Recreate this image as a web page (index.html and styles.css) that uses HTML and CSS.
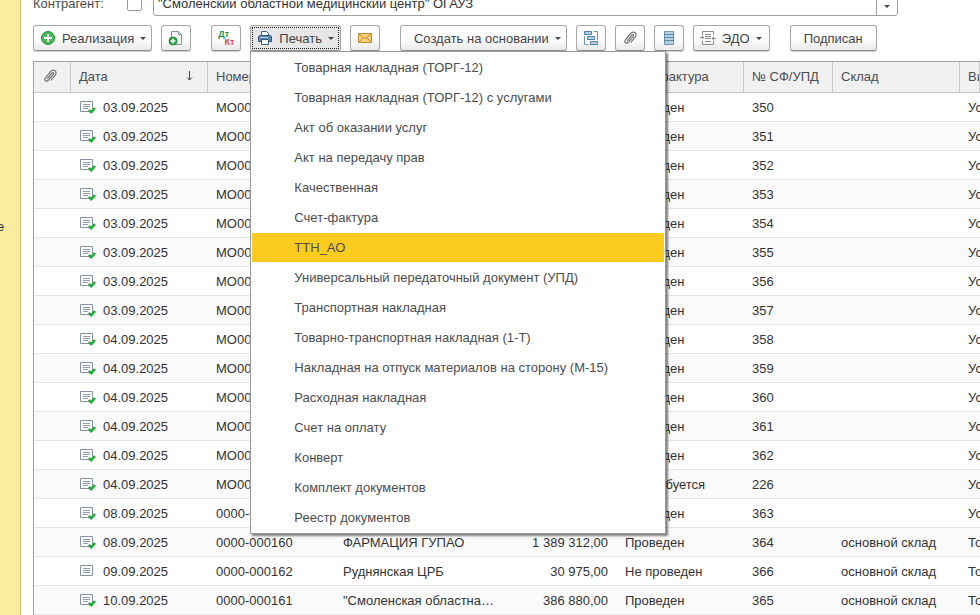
FILE: index.html
```html
<!DOCTYPE html>
<html lang="ru">
<head>
    <meta charset="UTF-8">
    <meta name="viewport" content="width=device-width, initial-scale=1.0">
    <title>Реализация</title>
    <link rel="stylesheet" href="styles.css">
</head>
<body>
    <!-- Общие значки -->
    <svg class="icon-defs" width="0" height="0" aria-hidden="true">
        <symbol id="clip" viewBox="0 0 16 16">
            <path d="M5.300 10.800L9.800 5.200c1.100-1.300 2.500-.2 1.500 1.100L6.500 12.200c-1.900 2.300-4.900.1-3.200-2.200L8.500 3.600c2.800-3.400 7.300-.3 4.800 3.200L8.800 12.500" fill="none" stroke="#707070" stroke-width="1.200"/>
        </symbol>
        <symbol id="doc" viewBox="0 0 16 14">
            <path d="M.5 1.500h12v10H.5z" fill="#fff" stroke="#8294a8"/>
            <path d="M3 4.500h7M3 6.500h7M3 8.500h7" stroke="#8d9cae"/>
        </symbol>
        <symbol id="posted" viewBox="0 0 16 14">
            <path d="M.5 1.500h12v10H.5z" fill="#fff" stroke="#8294a8"/>
            <path d="M3 4.500h7M3 6.500h7M3 8.500h5" stroke="#8d9cae"/>
            <path d="M8.800 10l2.400 2.200L15 8" fill="none" stroke="#25ab3a" stroke-width="2.600"/>
        </symbol>
    </svg>

    <div class="app">
        <aside class="sidebar">е</aside>

        <main class="content">
            <div class="filter">
                <label class="filter-label" for="useContractor">Контрагент:</label>
                <input class="filter-check" type="checkbox" id="useContractor">
                <div class="combo">
                    <input class="combo-input" type="text" aria-label="Контрагент" value="&quot;Смоленский областной медицинский центр&quot; ОГАУЗ">
                    <button class="combo-btn" aria-label="Выбрать"><span class="caret"></span></button>
                </div>
            </div>

            <div class="toolbar">
                <div class="group">
                    <button class="btn btn-add">
                        <svg width="16" height="16" viewBox="0 0 16 16"><circle cx="8" cy="8" r="6.500" fill="#45b955" stroke="#23923a"/><path d="M8 4v8M4 8h8" stroke="#fff" stroke-width="2"/></svg>
                        Реализация <span class="caret"></span>
                    </button>
                    <button class="btn btn-icon" aria-label="Создать копированием">
                        <svg width="16" height="16" viewBox="0 0 16 16"><path d="M3.500 1.500h7l3 3v10h-10z" fill="#f6f8fa" stroke="#8294a8"/><path d="M10.500 1.500v3h3" fill="none" stroke="#8294a8"/><circle cx="5" cy="11" r="4" fill="#2ba43e" stroke="#1d8a33"/><path d="M5 8.500v5M2.500 11h5" stroke="#fff" stroke-width="1.500"/></svg>
                    </button>
                </div>
                <div class="group">
                    <button class="btn btn-icon" aria-label="Дт Кт">
                        <span class="dtkt"><span class="dt">Дт</span><span class="kt">Кт</span></span>
                    </button>
                    <div class="dropdown">
                        <button class="btn btn-print">
                            <svg width="16" height="16" viewBox="0 0 16 16"><path d="M4.500 6V1.500h5l2 2V6" fill="#fff" stroke="#3d6488"/><path d="M2.500 5.500h11l1 1v5h-13v-5z" fill="#5d89b0" stroke="#32597d"/><path d="M3 7.500h8" stroke="#a9c5db"/><path d="M4.500 9.500h7v5h-7z" fill="#fff" stroke="#32597d"/></svg>
                            Печать <span class="caret"></span>
                        </button>
                        <ul class="menu">
                            <li><button class="menu-item">Товарная накладная (ТОРГ-12)</button></li>
                            <li><button class="menu-item">Товарная накладная (ТОРГ-12) с услугами</button></li>
                            <li><button class="menu-item">Акт об оказании услуг</button></li>
                            <li><button class="menu-item">Акт на передачу прав</button></li>
                            <li><button class="menu-item">Качественная</button></li>
                            <li><button class="menu-item">Счет-фактура</button></li>
                            <li><button class="menu-item active">ТТН_АО</button></li>
                            <li><button class="menu-item">Универсальный передаточный документ (УПД)</button></li>
                            <li><button class="menu-item">Транспортная накладная</button></li>
                            <li><button class="menu-item">Товарно-транспортная накладная (1-Т)</button></li>
                            <li><button class="menu-item">Накладная на отпуск материалов на сторону (М-15)</button></li>
                            <li><button class="menu-item">Расходная накладная</button></li>
                            <li><button class="menu-item">Счет на оплату</button></li>
                            <li><button class="menu-item">Конверт</button></li>
                            <li><button class="menu-item">Комплект документов</button></li>
                            <li><button class="menu-item">Реестр документов</button></li>
                        </ul>
                    </div>
                    <button class="btn btn-icon" aria-label="Отправить по почте">
                        <svg width="16" height="16" viewBox="0 0 16 16"><path d="M1.500 3.500h13v9h-13z" fill="#f9cf7c" stroke="#c58a2b"/><path d="M2 4l6 5 6-5M2 12l4-4M14 12l-4-4" fill="none" stroke="#c58a2b"/></svg>
                    </button>
                </div>
                <div class="group">
                    <button class="btn btn-create">Создать на основании <span class="caret"></span></button>
                    <button class="btn btn-icon" aria-label="Структура подчиненности">
                        <svg width="16" height="16" viewBox="0 0 16 16"><path d="M1.500 1.500h7v3h-7zM4.500 6.500h7v3h-7zM7.500 11.500h7v3h-7z" fill="#b5d0e3" stroke="#4d83aa"/><path d="M10.500 1.500h4V10M1.500 6v8.500h4" fill="none" stroke="#6d98b8"/></svg>
                    </button>
                    <button class="btn btn-icon" aria-label="Присоединенные файлы"><svg width="16" height="16"><use href="#clip"/></svg></button>
                    <button class="btn btn-icon" aria-label="Реестр">
                        <svg width="16" height="16" viewBox="0 0 16 16"><path d="M3.500 1.500h9v13h-9z" fill="#b5d0e3" stroke="#6f97b5"/><path d="M3 4.500h10M3 7.500h10M3 10.500h10" stroke="#5686a8"/></svg>
                    </button>
                    <button class="btn btn-edo">
                        <svg width="16" height="16" viewBox="0 0 16 16"><path d="M2.500 5V1.500h11V5M2.500 11v3.500h11V11M5 4.500h6M5 6.500h6M5 8.500h6M5 11.500h6" fill="none" stroke="#8b8b8b"/><path d="M0 7.500h3M13 8.500h3" stroke="#8b8b8b"/><path d="M2 5.500l2.500 2-2.500 2zM14 6.500l-2.500 2 2.500 2z" fill="#8b8b8b"/></svg>
                        ЭДО <span class="caret"></span>
                    </button>
                </div>
                <button class="btn btn-sign">Подписан</button>
            </div>

            <table class="docs">
                <thead>
                    <tr>
                        <th class="col-clip" aria-label="Файлы"><svg width="16" height="16"><use href="#clip"/></svg></th>
                        <th class="col-date"><div class="sorted">Дата <svg width="8" height="12" viewBox="0 0 8 12"><path d="M3.500 1v9M1 7.500l2.500 2.500L6 7.500" fill="none" stroke="#444"/></svg></div></th>
                        <th class="col-num">Номер</th>
                        <th class="col-name"></th>
                        <th class="col-sum"></th>
                        <th class="col-inv">Счет-фактура</th>
                        <th class="col-upd">№ СФ/УПД</th>
                        <th class="col-store">Склад</th>
                        <th>Вид операции</th>
                    </tr>
                </thead>
                <tbody id="docsBody"></tbody>
            </table>
        </main>
    </div>

    <script src="script.js"></script>
</body>
</html>
```
FILE: styles.css
```css
* {
    margin: 0;
    padding: 0;
    box-sizing: border-box;
}

body {
    font-family: "Liberation Sans", Arial, sans-serif;
    font-size: 13px;
    color: #333;
    background: #fff;
    overflow: hidden;
}

button, input {
    font: inherit;
    color: inherit;
}

.icon-defs {
    position: absolute;
}

.app {
    display: flex;
    height: 100vh;
}

.sidebar {
    flex: 0 0 21px;
    padding-top: 219px;
    background: #fbec9f;
    border-right: 1px solid #c9b877;
    text-indent: -3px;
}

.content {
    flex: 1;
    min-width: 0;
    padding-left: 12px;
}

/* Отбор прокручен за верхний край */
.filter {
    display: flex;
    align-items: center;
    height: 26px;
    margin-top: -10px;
}

.filter-label {
    width: 94px;
    color: #4d4d4d;
}

.filter-check {
    appearance: none;
    width: 15px;
    height: 15px;
    margin-right: 11px;
    border: 1px solid #999;
    border-radius: 2px;
}

.combo {
    display: flex;
    flex: 0 1 745px;
    height: 26px;
    border: 1px solid #a0a0a0;
    border-radius: 3px;
}

.combo-input {
    flex: 1;
    min-width: 0;
    padding: 0 4px;
    border: 0;
    background: none;
}

.combo-btn {
    width: 21px;
    border: 0;
    border-left: 1px solid #a0a0a0;
    background: none;
}

.caret {
    display: inline-block;
    border: 3px solid transparent;
    border-top-color: #444;
    border-bottom: 0;
}

.toolbar {
    display: flex;
    gap: 20px;
    margin: 9px 0 10px;
}

.group {
    display: flex;
    gap: 9px;
}

.btn {
    display: flex;
    align-items: center;
    gap: 6px;
    height: 26px;
    padding: 0 6px;
    border: 1px solid #a8a8a8;
    border-bottom-color: #909090;
    border-radius: 3px;
    background: linear-gradient(#fff 50%, #e9e9e9);
    box-shadow: 0 1px 0 #ccc;
    color: #444;
    white-space: nowrap;
}

.btn-icon {
    width: 30px;
    justify-content: center;
}

.btn-add {
    padding-right: 5px;
}

.btn-create {
    padding: 0 5px 0 13px;
}

.btn-edo {
    padding-right: 7px;
}

.btn-sign {
    padding: 0 13px;
}

.btn-print {
    background: #e6e6e6;
    outline: 1px dotted #222;
    outline-offset: -3px;
}

.dtkt {
    display: flex;
    flex-direction: column;
    width: 18px;
    font-size: 9px;
    font-weight: bold;
    line-height: 8px;
}

.dt {
    align-self: flex-start;
    color: #159a50;
}

.kt {
    align-self: flex-end;
    color: #e04545;
}

.dropdown {
    position: relative;
}

.menu {
    position: absolute;
    z-index: 1;
    top: 100%;
    left: 0;
    width: 416px;
    padding: 1px 1px 0;
    border: 1px solid #999;
    background: #fff;
    box-shadow: 2px 2px 2px rgba(0, 0, 0, 0.5);
    list-style: none;
}

.menu-item {
    display: block;
    width: 100%;
    height: 29px;
    margin-bottom: 1px;
    padding: 0 42px;
    border: 0;
    background: none;
    color: #4d4d4d;
    text-align: left;
}

.menu-item.active,
.menu-item:hover {
    background: #fbcb20;
}

.docs {
    width: 100%;
    table-layout: fixed;
    border-collapse: separate;
    border-spacing: 0;
    border-top: 1px solid #a0a0a0;
    border-left: 1px solid #a0a0a0;
}

.docs th,
.docs td {
    padding: 0 8px;
    overflow: hidden;
    text-align: left;
    white-space: nowrap;
}

.docs th {
    height: 31px;
    padding-bottom: 2px;
    border-right: 1px solid #c8c8c8;
    border-bottom: 1px solid #c8c8c8;
    background: #f1f1f1;
    color: #4d4d4d;
    font-weight: normal;
}

.docs td {
    height: 29px;
    border-bottom: 1px solid #e4e4e4;
}

.docs tbody tr:nth-child(even) {
    background: #fafafa;
}

.docs svg {
    display: block;
}

.docs .sum {
    padding-right: 9px;
    text-align: right;
}

.docs .name {
    padding-right: 2px;
    text-overflow: ellipsis;
}

.sorted {
    display: flex;
    align-items: center;
    justify-content: space-between;
    padding-right: 5px;
}

.date {
    display: flex;
    align-items: center;
    gap: 7px;
    padding-left: 1px;
}

.col-clip { width: 37px; }
.col-date { width: 137px; }
.col-num { width: 127px; }
.col-name { width: 165px; }
.col-sum { width: 117px; }
.col-inv { width: 127px; }
.col-upd { width: 89px; }
.col-store { width: 127px; }
```
FILE: script.js
```js
const docs = [
    ['03.09.2025', 'МО00', '', '', 'Проведен', '350', '', 'Услуги'],
    ['03.09.2025', 'МО00', '', '', 'Проведен', '351', '', 'Услуги'],
    ['03.09.2025', 'МО00', '', '', 'Проведен', '352', '', 'Услуги'],
    ['03.09.2025', 'МО00', '', '', 'Проведен', '353', '', 'Услуги'],
    ['03.09.2025', 'МО00', '', '', 'Проведен', '354', '', 'Услуги'],
    ['03.09.2025', 'МО00', '', '', 'Проведен', '355', '', 'Услуги'],
    ['03.09.2025', 'МО00', '', '', 'Проведен', '356', '', 'Услуги'],
    ['03.09.2025', 'МО00', '', '', 'Проведен', '357', '', 'Услуги'],
    ['04.09.2025', 'МО00', '', '', 'Проведен', '358', '', 'Услуги'],
    ['04.09.2025', 'МО00', '', '', 'Проведен', '359', '', 'Услуги'],
    ['04.09.2025', 'МО00', '', '', 'Проведен', '360', '', 'Услуги'],
    ['04.09.2025', 'МО00', '', '', 'Проведен', '361', '', 'Услуги'],
    ['04.09.2025', 'МО00', '', '', 'Проведен', '362', '', 'Услуги'],
    ['04.09.2025', 'МО00', '', '', 'Не требуется', '226', '', 'Услуги'],
    ['08.09.2025', '0000-0', '', '', 'Проведен', '363', '', 'Услуги'],
    ['08.09.2025', '0000-000160', 'ФАРМАЦИЯ ГУПАО', '1 389 312,00', 'Проведен', '364', 'основной склад', 'Товары'],
    ['09.09.2025', '0000-000162', 'Руднянская ЦРБ', '30 975,00', 'Не проведен', '366', 'основной склад', 'Товары'],
    ['10.09.2025', '0000-000161', '"Смоленская областна…', '386 880,00', 'Проведен', '365', 'основной склад', 'Товары']
];

document.getElementById('docsBody').innerHTML = docs.map(([date, num, name, sum, inv, upd, store, type]) => `
    <tr>
        <td></td>
        <td><div class="date"><svg width="16" height="14"><use href="#${inv === 'Не проведен' ? 'doc' : 'posted'}"/></svg>${date}</div></td>
        <td>${num}</td>
        <td class="name">${name}</td>
        <td class="sum">${sum}</td>
        <td>${inv}</td>
        <td>${upd}</td>
        <td>${store}</td>
        <td>${type}</td>
    </tr>
`).join('');
```
